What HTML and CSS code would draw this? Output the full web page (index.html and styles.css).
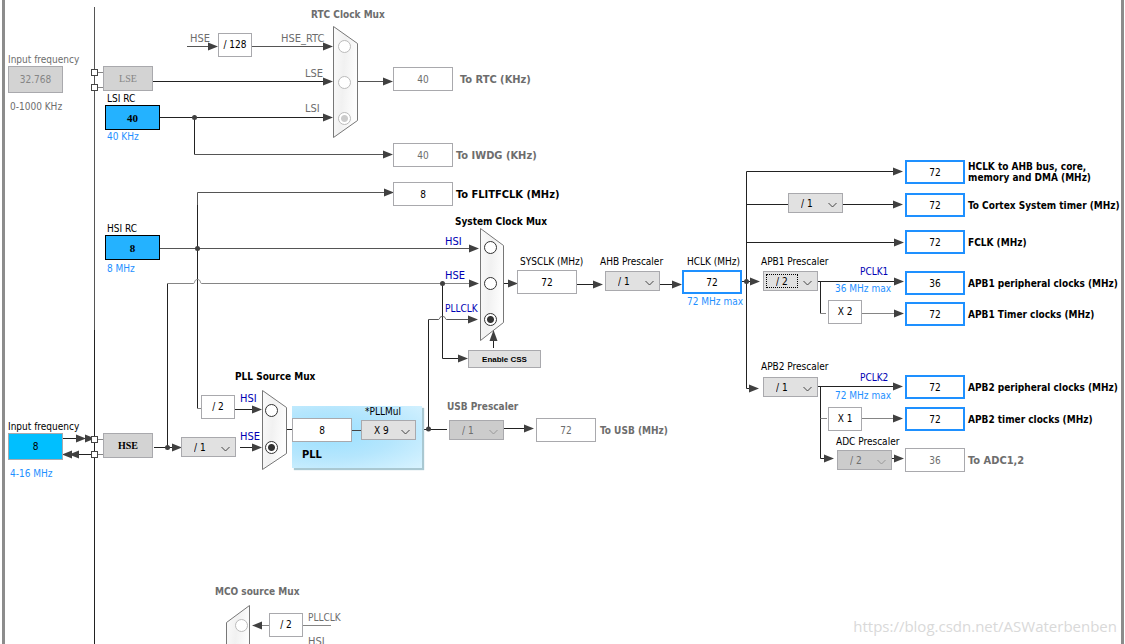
FILE: index.html
```html
<!DOCTYPE html>
<html lang="en">
<head>
<meta charset="utf-8">
<title>Clock Configuration</title>
<link rel="stylesheet" href="styles.css">
</head>
<body>
<main class="canvas">
  <svg class="wires" width="1125" height="650" aria-hidden="true">
    <defs>
      <linearGradient id="mux" x1="0" x2="1" y1="0" y2="0.3">
        <stop offset="0" stop-color="#fbfbfb"/><stop offset="0.5" stop-color="#f1f1f1"/><stop offset="1" stop-color="#fdfdfd"/>
      </linearGradient>
      <path id="ar" d="M0 0L-10 -4V4Z"/>
      <path id="al" d="M0 0L10 -4V4Z"/>
    </defs>

    <g class="wire">
      <path class="soft" d="M94.500 7V330M187 46.500H210M252 46.500H325"/>
      <path d="M94.500 330V650M153 81.500H325M160 117.500H325M194.500 117.500V154.500"/>
      <path class="soft" d="M194.500 154.500H385M357 81.500H385M197.500 205V192.500H386M160 248.500H471"/>
      <path d="M197.500 205V408.500M167.500 447V283.500"/>
      <path class="light" d="M167.500 283.500H193.500C195 283.500 194 279.500 197.500 279.500S200 283.500 201.500 283.500H471"/>
      <path class="light" d="M197.500 408.500H201M98 72.500H103M98 87.500H103M98 439.500H103M98 454.500H103"/>
      <path d="M442.500 283.500V358.500H460M428.500 429V319.500"/>
      <path class="soft" d="M428.500 319.500H438.500C440 319.500 439 316.500 442.500 316.500S445 319.500 446.500 319.500H470"/>
      <path d="M503 283.500H510M493.500 348V338M577 284.500H596M660 284.500H675M742 281.500H752"/>
      <path d="M746.500 171.500V388.500H752M746.500 171.500H895M746.500 204.500H788M843 204.500H895M746.500 242.500H896"/>
      <path d="M818 281.500H896M820.500 281.500V313.500M818 386.500H895M820.500 386.500V458.500H826"/>
      <path class="light" d="M820.500 313.500H826M862 313.500H896M820.500 418.500H827M862 418.500H895"/>
      <path d="M154 447.500H175M240 447.500H254M235 409.500H254M286 429.500H292M63 438.500H90M66 454.500H91"/>
      <path d="M417 429.500H447M504 428.500H526M892 458.500H896"/>
      <path class="light" d="M303 625.500H331M260 625.500H269"/>
    </g>

    <g class="mux">
      <path d="M333.500 26.500L357.500 43.500V120.500L333.500 137.500Z"/>
      <path d="M480.500 228.500L503.500 245.500V322.500L480.500 340.500Z"/>
      <path d="M262.500 390.500L286.500 407.500V453.500L262.500 469.500Z"/>
      <path d="M249.500 605.500L226.500 622.500V670H249.500Z"/>
    </g>

    <g class="tips">
      <use href="#ar" x="218" y="46.500"/><use href="#ar" x="333" y="46.500"/><use href="#ar" x="333" y="81.500"/><use href="#ar" x="333" y="117.500"/>
      <use href="#ar" x="393" y="81.500"/><use href="#ar" x="393" y="154.500"/><use href="#ar" x="394" y="192.500"/>
      <use href="#ar" x="479" y="248.500"/><use href="#ar" x="479" y="283.500"/><use href="#ar" x="478" y="319.500"/><use href="#ar" x="468" y="358.500"/>
      <use href="#ar" x="518" y="283.500"/><use href="#ar" x="603" y="284.500"/><use href="#ar" x="682" y="284.500"/><use href="#ar" x="760" y="281.500"/><use href="#ar" x="759" y="388.500"/>
      <use href="#ar" x="903" y="171.500"/><use href="#ar" x="903" y="204.500"/><use href="#ar" x="904" y="242.500"/><use href="#ar" x="904" y="281.500"/><use href="#ar" x="904" y="313.500"/>
      <use href="#ar" x="903" y="386.500"/><use href="#ar" x="903" y="418.500"/><use href="#ar" x="834" y="458.500"/><use href="#ar" x="904" y="458.500"/>
      <use href="#ar" x="182" y="447.500"/><use href="#ar" x="262" y="447.500"/><use href="#ar" x="262" y="409.500"/><use href="#ar" x="534" y="428.500"/>
      <use href="#ar" x="86" y="438.500"/><use href="#ar" x="95" y="438.500"/><use href="#al" x="62" y="454.500"/><use href="#al" x="69" y="454.500"/><use href="#al" x="252" y="625.500"/>
      <path d="M493.500 330L489.500 341H497.500Z"/>
      <circle cx="194.500" cy="117.500" r="2.500"/><circle cx="197.500" cy="248.500" r="2.500"/><circle cx="442.500" cy="283.500" r="2.500"/>
      <circle cx="746.500" cy="281.500" r="2.500"/><circle cx="167.500" cy="447.500" r="2.500"/><circle cx="428.500" cy="429" r="2.500"/>
    </g>
    <g class="pins">
      <rect x="91.500" y="69.500" width="6" height="6"/><rect x="91.500" y="84.500" width="6" height="6"/>
      <rect x="91.500" y="436.500" width="6" height="6"/><rect x="91.500" y="451.500" width="6" height="6"/>
    </g>

    <g class="net muted">
      <text x="190" y="42">HSE</text><text x="281" y="42">HSE_RTC</text><text x="305" y="77">LSE</text><text x="305" y="112">LSI</text>
      <text class="clk" x="308" y="621">PLLCLK</text><text x="308" y="645">HSI</text>
    </g>
    <g class="net navy">
      <text x="445" y="245">HSI</text><text x="445" y="279">HSE</text><text class="clk" x="445" y="312">PLLCLK</text>
      <text x="240" y="402">HSI</text><text x="240" y="440">HSE</text>
      <text class="clk" x="860" y="275">PCLK1</text><text class="clk" x="860" y="381">PCLK2</text>
    </g>
  </svg>

  <!-- Sources -->
  <label class="text muted p-lse-l" for="lse-in">Input frequency</label>
  <input class="field source off p-lse-in" id="lse-in" value="32.768" disabled>
  <span class="text muted p-lse-n">0-1000 KHz</span>
  <button class="osc off p-lse" disabled>LSE</button>
  <label class="text p-lsi-l" for="lsi">LSI RC</label>
  <input class="field rc p-lsi" id="lsi" value="40" readonly>
  <span class="text blue p-lsi-n">40 KHz</span>
  <label class="text p-hsi-l" for="hsi">HSI RC</label>
  <input class="field rc p-hsi" id="hsi" value="8" readonly>
  <span class="text blue p-hsi-n">8 MHz</span>
  <label class="text p-hse-l" for="hse-in">Input frequency</label>
  <input class="field source p-hse-in" id="hse-in" value="8">
  <span class="text blue p-hse-n">4-16 MHz</span>
  <button class="osc p-hse">HSE</button>

  <!-- RTC and watchdog -->
  <span class="text title muted p-rtc-t">RTC Clock Mux</span>
  <span class="factor p-d128">/ 128</span>
  <input class="radio off p-r1" type="radio" name="rtc" aria-label="HSE_RTC" disabled>
  <input class="radio off p-r2" type="radio" name="rtc" aria-label="LSE" disabled>
  <input class="radio off p-r3" type="radio" name="rtc" aria-label="LSI" checked disabled>
  <div class="output wide far muted p-rtc"><input class="field" id="rtc" value="40" disabled><label for="rtc">To RTC (KHz)</label></div>
  <div class="output wide muted p-iwdg"><input class="field" id="iwdg" value="40" disabled><label for="iwdg">To IWDG (KHz)</label></div>
  <div class="output wide p-flit"><input class="field" id="flit" value="8" readonly><label for="flit">To FLITFCLK (MHz)</label></div>

  <!-- System clock -->
  <span class="text title p-sys-t">System Clock Mux</span>
  <input class="radio p-s1" type="radio" name="sys" aria-label="HSI">
  <input class="radio p-s2" type="radio" name="sys" aria-label="HSE">
  <input class="radio p-s3" type="radio" name="sys" aria-label="PLLCLK" checked>
  <button class="css-button p-css">Enable CSS</button>
  <label class="text p-sysclk-l" for="sysclk">SYSCLK (MHz)</label>
  <input class="field p-sysclk" id="sysclk" value="72" readonly>
  <label class="text p-ahb-l" for="ahb">AHB Prescaler</label>
  <select class="select p-ahb" id="ahb"><option>/ 1</option></select>
  <label class="text p-hclk-l" for="hclk">HCLK (MHz)</label>
  <input class="field bound p-hclk" id="hclk" value="72">
  <span class="text blue p-hclk-n">72 MHz max</span>

  <!-- PLL -->
  <span class="text title p-pll-t">PLL Source Mux</span>
  <span class="factor p-d2">/ 2</span>
  <select class="select p-prediv" aria-label="HSE divider"><option>/ 1</option></select>
  <input class="radio p-p1" type="radio" name="pll" aria-label="HSI">
  <input class="radio p-p2" type="radio" name="pll" aria-label="HSE" checked>
  <section class="pll p-pll">
    <label class="pll-label" for="pllmul">*PLLMul</label>
    <div class="pll-row">
      <input class="field" value="8" aria-label="PLL input" readonly>
      <span class="link"></span>
      <select class="select" id="pllmul"><option>X 9</option></select>
    </div>
    <strong class="pll-name">PLL</strong>
  </section>
  <label class="text title muted p-usb-l" for="usbdiv">USB Prescaler</label>
  <select class="select off p-usbdiv" id="usbdiv" disabled><option>/ 1</option></select>
  <div class="output mid muted p-usb"><input class="field" id="usb" value="72" disabled><label for="usb">To USB (MHz)</label></div>

  <!-- Bus clocks -->
  <select class="select p-cortex" aria-label="Cortex prescaler"><option>/ 1</option></select>
  <label class="text p-apb1-l" for="apb1">APB1 Prescaler</label>
  <div class="focused p-apb1"><select class="select" id="apb1"><option>/ 2</option></select></div>
  <span class="text blue p-apb1-n">36 MHz max</span>
  <span class="factor p-x2">X 2</span>
  <label class="text p-apb2-l" for="apb2">APB2 Prescaler</label>
  <select class="select p-apb2" id="apb2"><option>/ 1</option></select>
  <span class="text blue p-apb2-n">72 MHz max</span>
  <span class="factor p-x1">X 1</span>
  <label class="text p-adc-l" for="adc">ADC Prescaler</label>
  <select class="select off p-adc" id="adc" disabled><option>/ 2</option></select>

  <div class="output p-o1"><input class="field bound" id="o1" value="72"><label for="o1">HCLK to AHB bus, core,<br>memory and DMA (MHz)</label></div>
  <div class="output p-o2"><input class="field bound" id="o2" value="72"><label for="o2">To Cortex System timer (MHz)</label></div>
  <div class="output p-o3"><input class="field bound" id="o3" value="72"><label for="o3">FCLK (MHz)</label></div>
  <div class="output p-o4"><input class="field bound" id="o4" value="36"><label for="o4">APB1 peripheral clocks (MHz)</label></div>
  <div class="output p-o5"><input class="field bound" id="o5" value="72"><label for="o5">APB1 Timer clocks (MHz)</label></div>
  <div class="output p-o6"><input class="field bound" id="o6" value="72"><label for="o6">APB2 peripheral clocks (MHz)</label></div>
  <div class="output p-o7"><input class="field bound" id="o7" value="72"><label for="o7">APB2 timer clocks (MHz)</label></div>
  <div class="output wide muted p-o8"><input class="field" id="o8" value="36" disabled><label for="o8">To ADC1,2</label></div>

  <!-- Clock output -->
  <span class="text title muted p-mco-t">MCO source Mux</span>
  <input class="radio off p-m1" type="radio" name="mco" aria-label="PLLCLK" disabled>
  <span class="factor p-md2">/ 2</span>

  <span class="watermark">https://blog.csdn.net/ASWaterbenben</span>
</main>
</body>
</html>
```

FILE: styles.css
```css
* { box-sizing: border-box; }

body {
  margin: 0;
  background: #fff;
  color: #000;
  font: 10px/14px "DejaVu Sans Condensed", "DejaVu Sans", sans-serif;
}

input, select, button { margin: 0; font: inherit; color: inherit; }

.canvas {
  position: relative;
  min-height: 100vh;
  overflow: hidden;
}

.canvas::before {
  content: "";
  position: absolute;
  inset: 0 1px 0 2px;
  border: solid #8c8c8c;
  border-width: 0 3px;
}

/* Wires */
.wires { position: absolute; top: 0; left: 0; }
.wire path { fill: none; stroke: #222; }
.wire .soft { stroke: #555; }
.wire .light { stroke: #858585; }
.mux path { fill: url(#mux); stroke: #777; }
.tips { fill: #404040; }
.pins rect { fill: #fff; stroke: #444; }
.net { font-size: 11px; }
.net .clk { font-size: 10px; }
.net.muted { fill: #6d6d6d; }
.net.navy { fill: #0000b4; }

/* Diagram parts */
.text, .osc, .factor, .output, .radio, .focused, .pll, .watermark, .css-button,
.canvas > .field, .canvas > .select { position: absolute; }

.text { white-space: nowrap; }
.title, .output { font-weight: bold; }
.muted { color: #6d6d6d; }
.blue { color: #1e90ff; }

.field {
  width: 60px;
  height: 24px;
  padding: 0;
  border: 1px solid #a9a9ad;
  border-radius: 0;
  background: #fff;
  text-align: center;
  font-size: 10px;
  font-weight: normal;
}
.field.bound { border: 2px solid #1e90ff; }
.field.source { width: 55px; height: 27px; background: #00bfff; border-color: #a9a9ad; }
.field.source.off { background: #d3d3d3; color: #858585; }
.field.rc {
  width: 55px;
  height: 25px;
  border-color: #000;
  background: #24b2ff;
  font: bold 11px "Liberation Serif", serif;
}

.osc {
  width: 50px;
  height: 25px;
  padding: 0;
  border: 1px solid #a9a9ad;
  background: #d3d3d3;
  font: bold 10px "Liberation Serif", serif;
}
.osc.off { color: #858585; font-weight: normal; }

.factor {
  width: 34px;
  height: 24px;
  border: 1px solid #a9a9ad;
  background: #fff;
  line-height: 22px;
  text-align: center;
}

.select {
  width: 55px;
  height: 20px;
  padding: 2px 0 0 12px;
  border: 1px solid #a9a9ad;
  border-radius: 0;
  appearance: none;
  background: #e1e1e1 url("data:image/svg+xml,%3Csvg xmlns='http://www.w3.org/2000/svg' width='9' height='6'%3E%3Cpath d='M.5 1l4 4 4-4' fill='none' stroke='%23444'/%3E%3C/svg%3E") no-repeat right 5px top 8px;
}
.select.off {
  background: #ccc url("data:image/svg+xml,%3Csvg xmlns='http://www.w3.org/2000/svg' width='9' height='6'%3E%3Cpath d='M.5 1l4 4 4-4' fill='none' stroke='%23999'/%3E%3C/svg%3E") no-repeat right 5px top 8px;
  color: #6d6d6d;
  opacity: 1;
}
.focused .select { display: block; }
.focused::after {
  content: "";
  position: absolute;
  inset: 3px 20px 3px 3px;
  border: 1px dotted #000;
  pointer-events: none;
}

.radio {
  width: 13px;
  height: 13px;
  border: 1px solid #333;
  border-radius: 50%;
  appearance: none;
  background: #fff;
}
.radio:checked { background: radial-gradient(circle, #333 3px, #fff 4px); }
.radio.off { border-color: #bbb; }
.radio.off:checked { background: radial-gradient(circle, #ccc 3px, #fff 4px); }

.css-button {
  width: 73px;
  height: 18px;
  padding: 0;
  border: 1px solid #a9a9ad;
  background: #e1e1e1;
  font: bold 8px "Liberation Sans", sans-serif;
}

.output {
  display: flex;
  align-items: center;
  gap: 3px;
  line-height: 11px;
  white-space: nowrap;
}
.output.wide { font-size: 11px; }
.output.mid { gap: 4px; }
.output.far { gap: 7px; }

.pll {
  width: 130px;
  height: 62px;
  background: radial-gradient(ellipse at 30% 45%, #9be0ff, #b5e6fd 50%, #d8f3ff);
  box-shadow: 2px 2px 1px #a9c8d2;
}
.pll-label { display: block; height: 14px; line-height: 12px; padding-left: 73px; }
.pll-row { display: flex; align-items: center; height: 20px; }
.link { width: 9px; height: 1px; background: #444; }
.pll-name { display: block; padding: 8px 0 0 10px; font-size: 11px; }

.watermark {
  right: 8px;
  bottom: 6px;
  color: #d9d9d9;
  font: 15px/24px "Open Sans", sans-serif;
}

/* Places on the canvas */
.p-lse-l { left: 8px; top: 53px; }
.p-lse-in { left: 8px; top: 66px; }
.p-lse-n { left: 10px; top: 100px; }
.p-lse { left: 103px; top: 66px; }
.p-lsi-l { left: 107px; top: 92px; }
.p-lsi { left: 105px; top: 105px; }
.p-lsi-n { left: 107px; top: 130px; }
.p-hsi-l { left: 107px; top: 222px; }
.p-hsi { left: 105px; top: 235px; }
.p-hsi-n { left: 107px; top: 262px; }
.p-hse-l { left: 8px; top: 420px; }
.p-hse-in { left: 8px; top: 433px; }
.p-hse-n { left: 10px; top: 467px; }
.p-hse { left: 103px; top: 433px; }

.p-rtc-t { left: 311px; top: 8px; }
.p-d128 { left: 218px; top: 33px; }
.p-r1 { left: 338px; top: 40px; }
.p-r2 { left: 338px; top: 76px; }
.p-r3 { left: 338px; top: 112px; }
.p-rtc { left: 393px; top: 67px; }
.p-iwdg { left: 393px; top: 143px; }
.p-flit { left: 393px; top: 182px; }

.p-sys-t { left: 455px; top: 215px; }
.p-s1 { left: 484px; top: 241px; }
.p-s2 { left: 484px; top: 277px; }
.p-s3 { left: 484px; top: 313px; }
.p-css { left: 468px; top: 350px; }
.p-sysclk-l { left: 520px; top: 255px; }
.p-sysclk { left: 517px; top: 270px; }
.p-ahb-l { left: 600px; top: 255px; }
.p-ahb { left: 605px; top: 271px; }
.p-hclk-l { left: 687px; top: 255px; }
.p-hclk { left: 682px; top: 270px; }
.p-hclk-n { left: 687px; top: 295px; }

.p-pll-t { left: 235px; top: 370px; }
.p-d2 { left: 201px; top: 395px; }
.p-prediv { left: 181px; top: 437px; }
.p-p1 { left: 265px; top: 404px; }
.p-p2 { left: 265px; top: 441px; }
.p-pll { left: 292px; top: 406px; }
.p-usb-l { left: 447px; top: 400px; }
.p-usbdiv { left: 449px; top: 420px; }
.p-usb { left: 536px; top: 418px; }

.p-cortex { left: 788px; top: 193px; }
.p-apb1-l { left: 761px; top: 255px; }
.p-apb1 { left: 763px; top: 271px; }
.p-apb1-n { left: 835px; top: 282px; }
.p-x2 { left: 828px; top: 300px; }
.p-apb2-l { left: 761px; top: 360px; }
.p-apb2 { left: 763px; top: 377px; }
.p-apb2-n { left: 835px; top: 389px; }
.p-x1 { left: 828px; top: 407px; }
.p-adc-l { left: 836px; top: 435px; }
.p-adc { left: 837px; top: 450px; }

.p-o1, .p-o2, .p-o3, .p-o4, .p-o5, .p-o6, .p-o7, .p-o8 { left: 905px; }
.p-o1 { top: 160px; }
.p-o2 { top: 193px; }
.p-o3 { top: 230px; }
.p-o4 { top: 271px; }
.p-o5 { top: 302px; }
.p-o6 { top: 375px; }
.p-o7 { top: 407px; }
.p-o8 { top: 448px; }

.p-mco-t { left: 215px; top: 585px; }
.p-m1 { left: 235px; top: 619px; }
.p-md2 { left: 269px; top: 613px; }
```
